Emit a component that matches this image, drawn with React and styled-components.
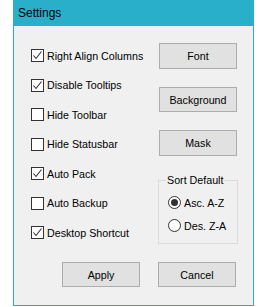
import React from "react";
import styled, { createGlobalStyle } from "styled-components";

const Global = createGlobalStyle`
  html, body { margin: 0; padding: 0; background: #ffffff; }
  body { font-family: "Liberation Sans", Arial, sans-serif; }
`;

const Page = styled.div`
  width: 272px;
  height: 307px;
  padding-left: 13px;
  box-sizing: border-box;
`;

const Window = styled.div`
  width: 241px;
  height: 306px;
  box-sizing: border-box;
  border: 1px solid #29afca;
  border-top: none;
  background: #f0f0f0;
  display: flex;
  flex-direction: column;
`;

const TitleBar = styled.div`
  height: 26px;
  flex: none;
  background: #29afca;
  margin: 0 -1px;
  padding-left: 5px;
  display: flex;
  align-items: center;
  font-size: 12px;
  color: #000;
`;

const Body = styled.div`
  flex: 1;
  padding: 17px 16px 0 17px;
  display: flex;
  flex-direction: column;
  font-size: 10.7px;
  color: #000;
`;

const Main = styled.div`
  display: flex;
  justify-content: space-between;
`;

const LeftCol = styled.div`
  padding-top: 6px;
  display: grid;
  grid-auto-rows: 13px;
  row-gap: 16.5px;
`;

const CheckRow = styled.label`
  display: flex;
  align-items: center;
  gap: 3px;
  height: 13px;
  white-space: nowrap;
`;

const Box = styled.span`
  width: 13px;
  height: 13px;
  box-sizing: border-box;
  border: 1px solid #333333;
  background: #ffffff;
  display: flex;
  align-items: center;
  justify-content: center;
  flex: none;
`;

const RightCol = styled.div`
  width: 78px;
  display: flex;
  flex-direction: column;
  gap: 18px;
`;

const Button = styled.button`
  width: 78px;
  height: ${(p) => (p.$short ? 25 : 26)}px;
  box-sizing: border-box;
  border: 1px solid #adadad;
  background: #e1e1e1;
  font-family: inherit;
  font-size: 10.7px;
  color: #000;
  padding: 0;
  margin: 0;
  display: flex;
  align-items: center;
  justify-content: center;
`;

const Group = styled.fieldset`
  margin: -1px -1px 0;
  padding: 9px 0 0 9px;
  height: 71px;
  box-sizing: border-box;
  border: 1px solid #dcdcdc;
  display: flex;
  flex-direction: column;
  gap: 10px;
`;

const Legend = styled.legend`
  padding: 0 1px;
  margin-left: -2px;
  font-size: 10.7px;
  line-height: 14px;
`;

const RadioRow = styled.label`
  display: flex;
  align-items: center;
  gap: 3px;
  height: 13px;
  white-space: nowrap;
`;

const Circle = styled.span`
  width: 13px;
  height: 13px;
  box-sizing: border-box;
  border-radius: 50%;
  border: 1px solid #333333;
  background: #ffffff;
  display: flex;
  align-items: center;
  justify-content: center;
  flex: none;
  &::after {
    content: "";
    width: 7px;
    height: 7px;
    border-radius: 50%;
    background: ${(p) => (p.$on ? "#333333" : "transparent")};
  }
`;

const Footer = styled.div`
  margin-top: 18px;
  display: flex;
  justify-content: flex-end;
  gap: 18px;
  padding-right: 1px;
`;

const Check = () => (
  <svg width="11" height="11" viewBox="0 0 11 11">
    <path d="M1.5 5.5 L4 8.5 L9.5 1.5" fill="none" stroke="#333" strokeWidth="1.1" />
  </svg>
);

const items = [
  ["Right Align Columns", true],
  ["Disable Tooltips", true],
  ["Hide Toolbar", false],
  ["Hide Statusbar", false],
  ["Auto Pack", true],
  ["Auto Backup", false],
  ["Desktop Shortcut", true],
];

export default function App() {
  return (
    <>
      <Global />
      <Page>
        <Window>
          <TitleBar>Settings</TitleBar>
          <Body>
            <Main>
              <LeftCol>
                {items.map(([label, on]) => (
                  <CheckRow key={label}>
                    <Box>{on && <Check />}</Box>
                    {label}
                  </CheckRow>
                ))}
              </LeftCol>
              <RightCol>
                <Button>Font</Button>
                <Button $short>Background</Button>
                <Button>Mask</Button>
                <Group>
                  <Legend>Sort Default</Legend>
                  <RadioRow>
                    <Circle $on />
                    Asc. A-Z
                  </RadioRow>
                  <RadioRow>
                    <Circle />
                    Des. Z-A
                  </RadioRow>
                </Group>
              </RightCol>
            </Main>
            <Footer>
              <Button $short>Apply</Button>
              <Button $short>Cancel</Button>
            </Footer>
          </Body>
        </Window>
      </Page>
    </>
  );
}
